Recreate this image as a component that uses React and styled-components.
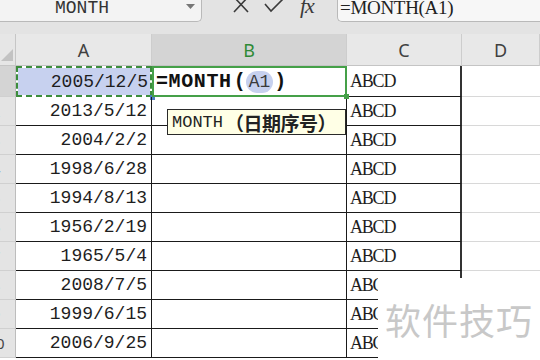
import React from 'react';
import styled, { createGlobalStyle } from 'styled-components';

const GlobalStyle = createGlobalStyle`
  html, body { margin: 0; padding: 0; background: #fff; overflow: hidden; }
  body { width: 540px; height: 360px; font-family: "Liberation Sans", sans-serif; }
  * { box-sizing: border-box; }
`;

const Page = styled.div`
  position: relative;
  width: 540px;
  height: 360px;
  overflow: hidden;
  background: #fff;
  display: flex;
  flex-direction: column;
`;

const Toolbar = styled.div`
  display: flex;
  align-items: flex-start;
  height: 34px;
  flex-shrink: 0;
  background: #e3e3e3;
`;

const NameBox = styled.div`
  width: 202px;
  height: 22px;
  display: flex;
  align-items: flex-start;
  padding-left: 55px;
  background: #f3f3f3;
  border-right: 1px solid #b9b9b9;
  border-bottom: 1px solid #b9b9b9;
  border-bottom-right-radius: 5px;
`;

const NameText = styled.span`
  font-family: "Liberation Mono", monospace;
  font-size: 18px;
  line-height: 18px;
  margin-top: -1px;
  color: #333;
`;

const Caret = styled.svg`
  margin-left: auto;
  margin-right: 6px;
  margin-top: 4px;
`;

const IconGroup = styled.div`
  display: flex;
  align-items: flex-start;
  margin-left: 30px;
  gap: 14px;
  height: 22px;
`;

const FxText = styled.span`
  font-family: "Liberation Serif", serif;
  font-style: italic;
  font-size: 22px;
  line-height: 18px;
  margin-top: -3px;
  margin-left: 2px;
  color: #3a3a3a;
  letter-spacing: -1px;
`;

const FormulaBox = styled.div`
  margin-left: auto;
  width: 203px;
  height: 22px;
  padding-left: 2px;
  background: #f7f7f7;
  border-left: 1px solid #b9b9b9;
  border-bottom: 1px solid #b9b9b9;
  border-bottom-left-radius: 5px;
`;

const FormulaText = styled.span`
  display: block;
  font-family: "Liberation Serif", serif;
  font-size: 19px;
  line-height: 20px;
  margin-top: -2px;
  color: #222;
  letter-spacing: -0.3px;
`;

const Sheet = styled.div`
  display: grid;
  grid-template-columns: 16px 136px 195px 115px 78px;
  grid-template-rows: 32px 31px repeat(10, 29px);
`;

const Corner = styled.div`
  background: #e6e6e6;
  border-right: 1px solid #c6c6c6;
  border-bottom: 1px solid #c6c6c6;
  display: flex;
  align-items: flex-end;
  justify-content: flex-end;
  padding: 0 2px 4px 0;
`;

const ColHead = styled.div`
  display: flex;
  align-items: center;
  justify-content: center;
  font-family: "Noto Sans", sans-serif;
  font-size: 18px;
  color: ${p => (p.$active ? '#2f8a36' : '#404040')};
  background: ${p => (p.$active ? '#d4d4d4' : '#e8e8e8')};
  border-right: 1px solid #cdcdcd;
  border-bottom: 1px solid #c4c4c4;
`;

const RowHead = styled.div`
  overflow: hidden;
  display: flex;
  align-items: center;
  justify-content: flex-end;
  background: ${p => (p.$active ? '#d4d4d4' : '#e4e4e4')};
  border-right: 1px solid #bdbdbd;
  border-bottom: 1px solid #d0d0d0;
`;

const RowNum = styled.span`
  flex-shrink: 0;
  width: 38px;
  text-align: center;
  font-family: "Noto Sans", sans-serif;
  font-size: 15px;
  color: #444;
  white-space: nowrap;
`;

const borderRight = { a: '1px solid #1a1a1a', b: '1px solid #1a1a1a', c: '2px solid #333', d: 'none' };
const borderBottom = { a: '1px solid #1a1a1a', b: '1px solid #1a1a1a', c: '1px solid #1a1a1a', d: '1px solid #d8d8d8' };

const Cell = styled.div`
  position: relative;
  display: flex;
  align-items: center;
  justify-content: ${p => (p.$col === 'a' ? 'flex-end' : 'flex-start')};
  padding: ${p => (p.$col === 'a' ? '0 4px 0 0' : '0 0 0 3px')};
  border-right: ${p => borderRight[p.$col]};
  border-bottom: ${p => borderBottom[p.$col]};
  white-space: nowrap;
`;

const CopiedCell = styled(Cell)`
  border: 2px dashed #3c8d3c;
  background: linear-gradient(#c7d1ef, #c7d1ef) padding-box, #ffffff border-box;
  padding-right: 2px;
`;

const EditCell = styled(Cell)`
  border: 2px solid #45a048;
  padding-left: 2px;
  z-index: 2;
`;

const Handle = styled.span`
  position: absolute;
  width: 5px;
  height: 5px;
  right: ${p => p.$right}px;
  bottom: ${p => p.$bottom}px;
  background: ${p => p.$color};
`;

const DateText = styled.span`
  font-family: "Liberation Mono", monospace;
  font-size: 18px;
  color: #1e1e1e;
`;

const AbcText = styled.span`
  font-family: "Liberation Serif", serif;
  font-size: 18px;
  letter-spacing: -1.2px;
  color: #1e1e1e;
`;

const FormulaBold = styled.span`
  font-family: "Liberation Mono", monospace;
  font-weight: bold;
  font-size: 20px;
  letter-spacing: 0.6px;
  color: #111;
`;

const Paren = styled.span`
  font-family: "Liberation Mono", monospace;
  font-weight: bold;
  font-size: 20px;
  color: #111;
  margin: ${p => p.$m};
`;

const RefPill = styled.span`
  display: inline-flex;
  align-items: center;
  justify-content: center;
  height: 22px;
  padding: 0 3px;
  border-radius: 11px;
  background: #c6d0ee;
  font-family: "Liberation Mono", monospace;
  font-size: 18px;
  color: #3a3a3a;
`;

const Tooltip = styled.div`
  position: absolute;
  left: 167px;
  top: 109px;
  height: 26px;
  width: 179px;
  display: flex;
  align-items: center;
  padding-left: 4px;
  background: #ffffe6;
  border: 1px solid #2a2a2a;
  z-index: 3;
  white-space: nowrap;
`;

const TipName = styled.span`
  font-family: "Liberation Mono", monospace;
  font-size: 17px;
  color: #222;
`;

const TipArgs = styled.span`
  font-family: "Noto Sans CJK SC", sans-serif;
  font-weight: bold;
  font-size: 19px;
  color: #222;
  margin-left: 2px;
  letter-spacing: -0.5px;
`;

const Watermark = styled.div`
  position: absolute;
  right: 0;
  bottom: 0;
  width: 162px;
  height: 82px;
  background: #ffffff;
  display: flex;
  align-items: center;
  padding-left: 7px;
  z-index: 4;
`;

const WatermarkText = styled.span`
  font-family: "Noto Sans CJK SC", sans-serif;
  font-weight: 400;
  font-size: 36px;
  letter-spacing: 1px;
  color: #c8c8c8;
`;

const dates = [
  '2005/12/5', '2013/5/12', '2004/2/2', '1998/6/28', '1994/8/13',
  '1956/2/19', '1965/5/4', '2008/7/5', '1999/6/15', '2006/9/25',
];

export default function App() {
  return (
    <Page>
      <GlobalStyle />
      <Toolbar>
        <NameBox>
          <NameText>MONTH</NameText>
          <Caret width="9" height="6" viewBox="0 0 9 6">
            <path d="M0 0 L9 0 L4.5 5 Z" fill="#777" />
          </Caret>
        </NameBox>
        <IconGroup>
          <svg width="18" height="14" viewBox="0 0 18 14">
            <path d="M2 -3 L16 12 M16 -3 L2 12" stroke="#3a3a3a" strokeWidth="1.6" fill="none" />
          </svg>
          <svg width="20" height="14" viewBox="0 0 20 14">
            <path d="M1 4 L7 11 L19 -1" stroke="#3a3a3a" strokeWidth="1.6" fill="none" />
          </svg>
          <FxText>fx</FxText>
        </IconGroup>
        <FormulaBox>
          <FormulaText>=MONTH(A1)</FormulaText>
        </FormulaBox>
      </Toolbar>
      <Sheet>
        <Corner>
          <svg width="12" height="12" viewBox="0 0 12 12">
            <path d="M12 0 L12 12 L0 12 Z" fill="#c2c2c2" />
          </svg>
        </Corner>
        <ColHead>A</ColHead>
        <ColHead $active>B</ColHead>
        <ColHead>C</ColHead>
        <ColHead>D</ColHead>
        {dates.map((d, i) => (
          <React.Fragment key={d}>
            <RowHead $active={i === 0}><RowNum>{i + 1}</RowNum></RowHead>
            {i === 0 ? (
              <CopiedCell $col="a">
                <DateText>{d}</DateText>
                <Handle $right={-5} $bottom={-5} $color="#4a7cc2" />
              </CopiedCell>
            ) : (
              <Cell $col="a"><DateText>{d}</DateText></Cell>
            )}
            {i === 0 ? (
              <EditCell $col="b">
                <FormulaBold>=MONTH</FormulaBold>
                <Paren $m="0 0 0 2px">(</Paren>
                <RefPill>A1</RefPill>
                <Paren $m="0 0 0 1px">)</Paren>
                <Handle $right={-4} $bottom={-4} $color="#45a048" />
              </EditCell>
            ) : (
              <Cell $col="b" />
            )}
            <Cell $col="c"><AbcText>ABCD</AbcText></Cell>
            <Cell $col="d" />
          </React.Fragment>
        ))}
      </Sheet>
      <Tooltip>
        <TipName>MONTH</TipName>
        <TipArgs>（日期序号）</TipArgs>
      </Tooltip>
      <Watermark>
        <WatermarkText>软件技巧</WatermarkText>
      </Watermark>
    </Page>
  );
}
